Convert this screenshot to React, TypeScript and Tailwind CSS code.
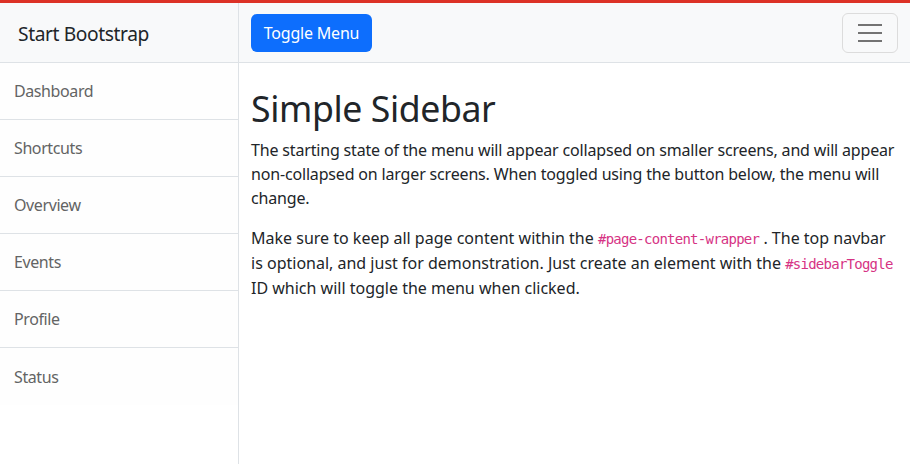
import React from "react";

const items = ["Dashboard", "Shortcuts", "Overview", "Events", "Profile", "Status"];

const codeStyle = { fontFamily: '"DejaVu Sans Mono", "Liberation Mono", monospace' };

export default function App() {
  return (
    <div
      className="w-[910px] h-[464px] flex flex-col bg-white text-[#212529] overflow-hidden"
      style={{ fontFamily: '"Noto Sans", "Liberation Sans", sans-serif' }}
    >
      <div className="h-[3px] bg-[#dc3126] shrink-0" />
      <div className="flex flex-1 min-h-0">
        <aside className="w-[239px] shrink-0 border-r border-[#dee2e6] flex flex-col">
          <div className="h-[60px] shrink-0 bg-[#f8f9fa] border-b border-[#dee2e6] flex items-center pl-[18px] pt-[3px] text-[19.2px] tracking-[-0.4px]">
            Start Bootstrap
          </div>
          <div className="flex flex-col">
            {items.map((it, i) => (
              <div
                key={it}
                className={`h-[57px] flex items-center pl-[14px] bg-[#fefefe] text-[#636464] text-[16px] tracking-[-0.4px] ${
                  i < items.length - 1 ? "border-b border-[#dee2e6]" : ""
                }`}
              >
                {it}
              </div>
            ))}
          </div>
        </aside>
        <main className="flex-1 min-w-0 flex flex-col">
          <nav className="h-[60px] shrink-0 bg-[#f8f9fa] border-b border-[#dee2e6] flex items-center justify-between pl-[12px] pr-[12px]">
            <button className="h-[38px] w-[121px] rounded-[6px] bg-[#0d6efd] text-white text-[16px] tracking-[-0.2px] flex items-center justify-center">
              Toggle Menu
            </button>
            <button className="h-[40px] w-[56px] rounded-[6px] border border-[#dcdcdc] flex flex-col items-center justify-center gap-[6px]">
              <span className="block w-[24px] h-[2px] bg-[#737373]" />
              <span className="block w-[24px] h-[2px] bg-[#737373]" />
              <span className="block w-[24px] h-[2px] bg-[#737373]" />
            </button>
          </nav>
          <div className="px-[12px]">
            <h1 className="mt-[24px] mb-[8px] text-[35.65px] leading-[1.2] font-normal tracking-[-0.4px]">Simple Sidebar</h1>
            <p className="mb-[16px] text-[16px] leading-[24px] tracking-[-0.17px]">
              The starting state of the menu will appear collapsed on smaller screens, and will appear
              non-collapsed on larger screens. When toggled using the button below, the menu will change.
            </p>
            <p className="text-[16px] leading-[24px] tracking-[0px]">
              Make sure to keep all page content within the{" "}
              <code className="text-[14px] text-[#d63384] tracking-[-0.75px]" style={codeStyle}>
                #page-content-wrapper
              </code>{" "}
              . The top navbar is optional, and just for demonstration. Just create an element with the{" "}
              <code className="text-[14px] text-[#d63384] tracking-[-0.75px]" style={codeStyle}>
                #sidebarToggle
              </code>{" "}
              ID which will toggle the menu when clicked.
            </p>
          </div>
        </main>
      </div>
    </div>
  );
}
